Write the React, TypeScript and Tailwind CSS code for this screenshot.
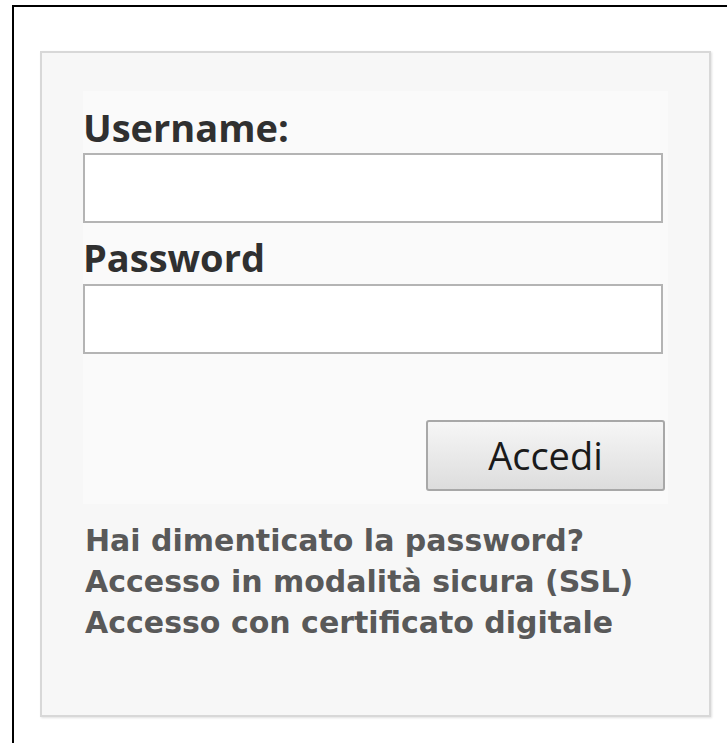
const labelCls = "block text-[38px] leading-[52px] font-bold text-[#303030]"
const inputCls = "block w-[580px] h-[70px] bg-white border-2 border-[#b4b4b4] outline-none"

const LoginBox = () => {
    return (
        <div className="ml-[26px] mt-[43px] w-[671px] h-[666px] bg-[#f7f7f7] border-2 border-[#d8d8d8] shadow-[1px_1px_2px_rgba(0,0,0,0.12)]">
            {/* form area */}
            <form className="ml-[41px] mt-[38px] w-[585px] bg-[#fafafa] pt-[10px] pb-[13px]">
                <label className={labelCls}>Username:</label>
                <input type="text" className={inputCls} />
                <label className={`${labelCls} mt-[8px] leading-[53px]`}>Password</label>
                <input type="password" className={inputCls} />
                <div className="flex justify-end mt-[66px] pr-[3px]">
                    <button
                        type="button"
                        className="w-[239px] h-[71px] rounded-[3px] border-2 border-[#a8a8a8] bg-gradient-to-b from-[#f6f6f6] to-[#dddddd] text-[38px] font-normal text-[#1a1a1a]"
                    >
                        Accedi
                    </button>
                </div>
            </form>

            {/* links */}
            <div className="ml-[43px] mt-[16px] flex flex-col text-[30px] leading-[41px] font-bold text-[#595959] font-['DejaVu_Sans',sans-serif]">
                <a href="#">Hai dimenticato la password?</a>
                <a href="#">Accesso in modalità sicura (SSL)</a>
                <a href="#">Accesso con certificato digitale</a>
            </div>
        </div>
    )
}

export default function App() {
    return (
        <div className="w-[727px] h-[743px] bg-white overflow-hidden font-['Open_Sans',sans-serif]">
            <div className="ml-[12px] mt-[5px] h-[738px] border-l-2 border-t-2 border-black pt-[1px]">
                <LoginBox />
            </div>
        </div>
    )
}
